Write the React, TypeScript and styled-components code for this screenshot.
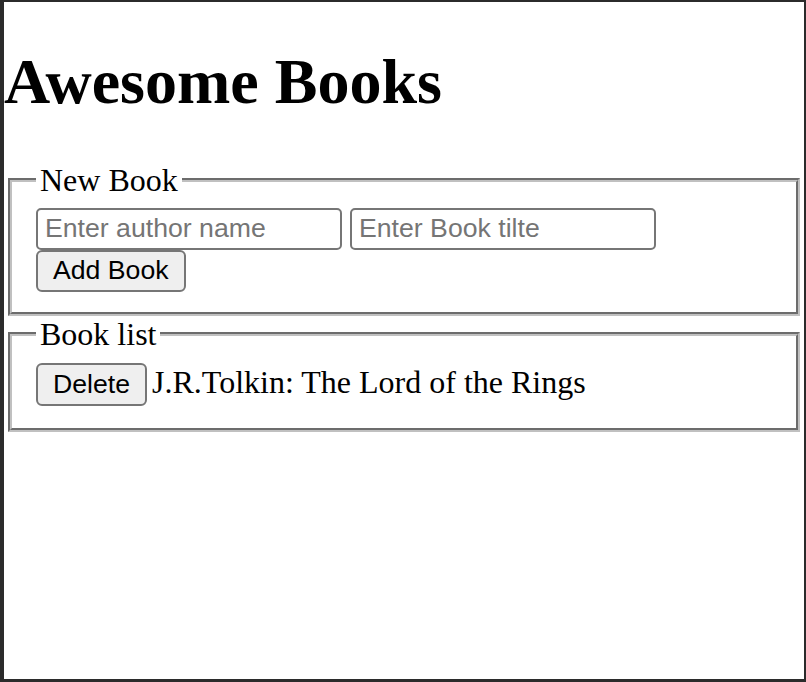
import React from 'react';
import styled, { createGlobalStyle } from 'styled-components';

const GlobalStyle = createGlobalStyle`
  html, body {
    margin: 0;
    padding: 0;
    background: #2b2b2b;
  }
`;

const Page = styled.div`
  box-sizing: border-box;
  height: 100vh;
  border-style: solid;
  border-color: #2b2b2b;
  border-width: 2px 2px 3px 4px;
  background: #ffffff;
  color: #000000;
  font-family: 'Liberation Serif', 'Times New Roman', serif;
  font-size: 32px;
  overflow: hidden;
`;

const Title = styled.h1`
  margin: 42.88px 0;
  font-size: 64px;
  font-weight: bold;
  line-height: normal;
`;

const Section = styled.fieldset`
  margin: 0 4px;
  padding: 9px 24px 20px;
  border: 4px groove rgb(192, 192, 192);
  min-width: min-content;
`;

const Legend = styled.legend`
  padding: 0 4px;
  font-size: 32px;
  line-height: normal;
`;

const Form = styled.form`
  margin: 0;
`;

const FieldRow = styled.div`
  display: flex;
  gap: 8px;
`;

const TextInput = styled.input`
  box-sizing: border-box;
  width: 306px;
  height: 42px;
  margin: 0;
  padding: 2px 7px;
  border: 2px solid #767676;
  border-radius: 5px;
  background: #ffffff;
  font-family: 'Liberation Sans', Arial, sans-serif;
  font-size: 26.67px;
  color: #000000;
  outline: none;

  &::placeholder {
    color: #757575;
  }
`;

const Button = styled.button<{ $tall?: boolean }>`
  box-sizing: border-box;
  height: ${(p) => (p.$tall ? '43px' : '42px')};
  margin: 0;
  padding: 2px 15px;
  border: 2px solid #767676;
  border-radius: 6px;
  background: #efefef;
  color: #000000;
  font-family: 'Liberation Sans', Arial, sans-serif;
  font-size: 26.67px;
  line-height: normal;
  cursor: pointer;
`;

const BookRow = styled.div`
  display: flex;
  align-items: baseline;
  gap: 5px;
  padding: 1px 0 2px;
  line-height: normal;
`;

type Book = { author: string; title: string };

const books: Book[] = [{ author: 'J.R.Tolkin', title: 'The Lord of the Rings' }];

export default function App() {
  return (
    <>
      <GlobalStyle />
      <Page>
        <Title>Awesome Books</Title>
        <Section>
          <Legend>New Book</Legend>
          <Form onSubmit={(e) => e.preventDefault()}>
            <FieldRow>
              <TextInput type="text" placeholder="Enter author name" />
              <TextInput type="text" placeholder="Enter Book tilte" />
            </FieldRow>
            <Button type="submit">Add Book</Button>
          </Form>
        </Section>
        <Section>
          <Legend>Book list</Legend>
          {books.map((book) => (
            <BookRow key={book.title}>
              <Button type="button" $tall>
                Delete
              </Button>
              <span>
                {book.author}: {book.title}
              </span>
            </BookRow>
          ))}
        </Section>
      </Page>
    </>
  );
}
